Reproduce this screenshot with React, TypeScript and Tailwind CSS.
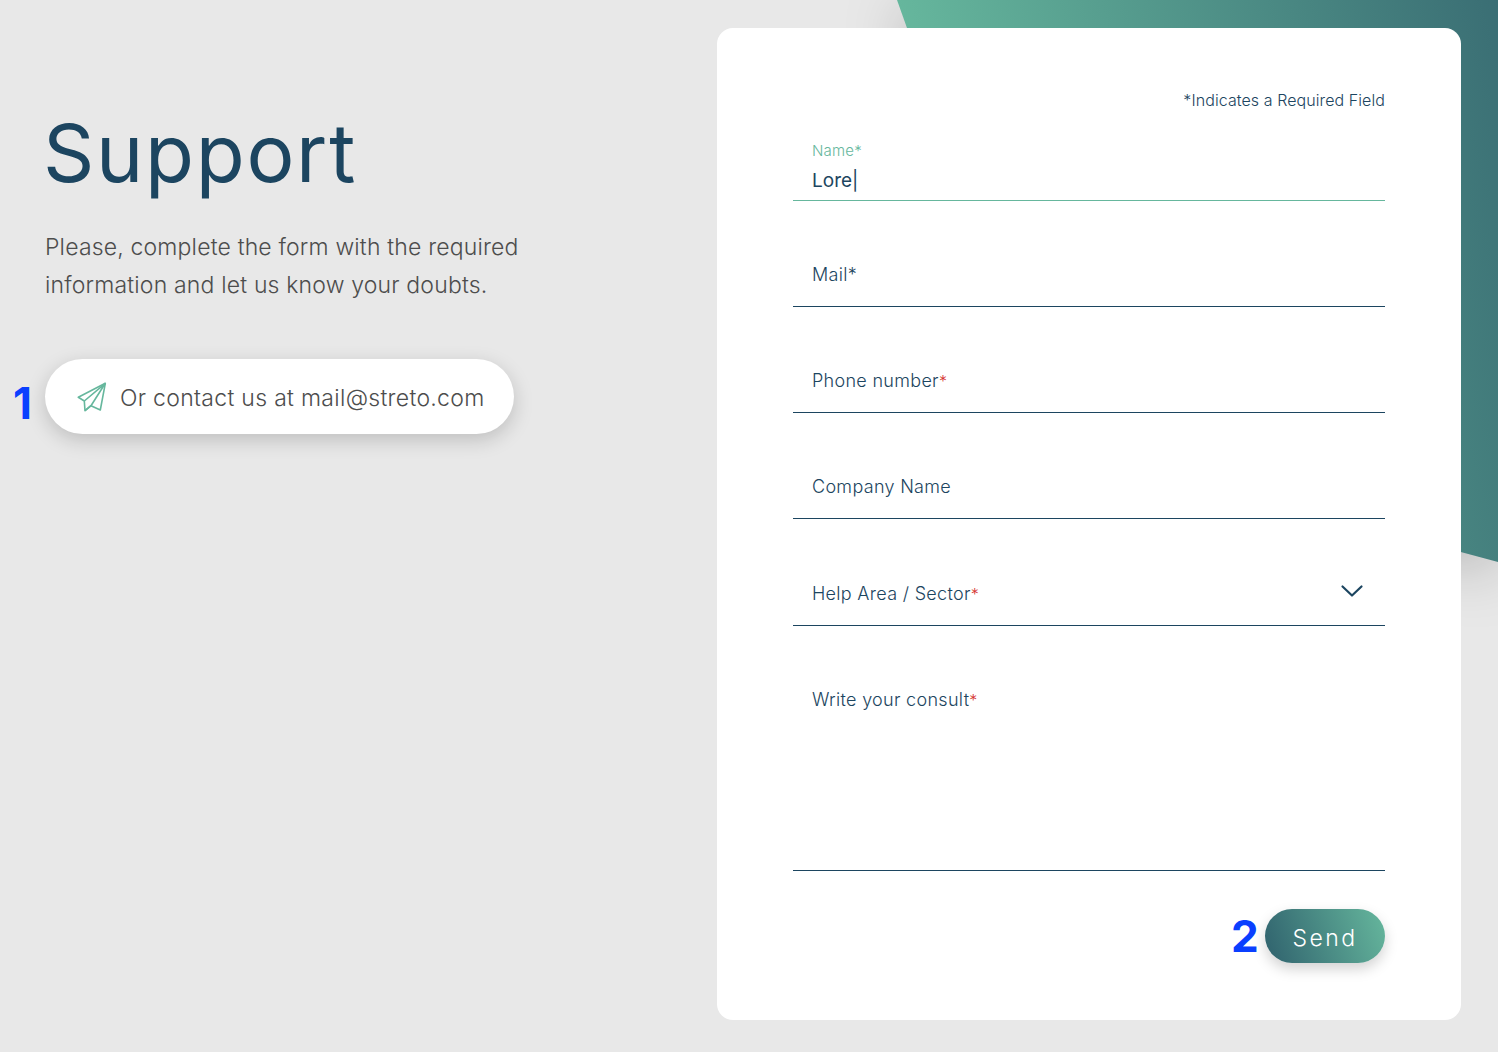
import React from "react";

type Field = {
  label: string;
  star?: boolean;
};

const fields: Field[] = [
  { label: "Mail*" },
  { label: "Phone number", star: true },
  { label: "Company Name" },
];

const PlaneIcon = () => (
  <svg width="30" height="30" viewBox="0 0 30 30" fill="none" stroke="#66b79d" strokeWidth="1.6" strokeLinejoin="round">
    <path d="M28.3 1.3 1.3 15.3l6 3.7.7 9.7 6-5 9.3 4.3z" />
    <path d="M28.3 1.3 7.3 19M28.3 1.3 14 23.7 8 28.7" />
  </svg>
);

const Label = ({ label, star }: Field) => (
  <span className="text-[18px] leading-[24px] text-[#1c4560] font-light tracking-[0.3px]">
    {label}
    {star && <span className="text-[16px] text-[#d5322e]">*</span>}
  </span>
);

const App = () => {
  return (
    <div className="relative h-[1052px] overflow-hidden bg-[#e8e8e8] font-['Inter',sans-serif] flex">
      {/* green shape behind the card */}
      <div className="absolute inset-0 drop-shadow-[0_12px_30px_rgba(0,0,0,0.22)]">
        <div className="h-full w-full bg-[linear-gradient(75deg,#66b79d_66%,#3a6e74_100%)] [clip-path:polygon(897px_0,1498px_0,1498px_562px,1055px_443px)]" />
      </div>

      <div className="relative w-[717px] pl-[45px] pt-[103px] shrink-0">
        <h1 className="-ml-[2px] text-[80px] leading-[100px] text-[#1c4560] font-normal tracking-[1.7px]">Support</h1>
        <p className="mt-[25px] text-[23px] leading-[38px] text-[#4d4d4d] font-light tracking-[0.17px]">
          Please, complete the form with the required
          <br />
          information and let us know your doubts.
        </p>
        <div className="relative mt-[55px] w-[469px] h-[75px] rounded-full bg-white shadow-[0_6px_20px_rgba(0,0,0,0.18)] flex items-center pl-[32px] gap-[13px]">
          <span className="absolute -left-[32px] top-[19px] text-[44px] leading-[50px] font-bold text-[#0a3fff]">1</span>
          <PlaneIcon />
          <span className="mt-[3px] text-[23px] text-[#4d4d4d] font-light tracking-[0.3px]">Or contact us at mail@streto.com</span>
        </div>
      </div>

      <div className="relative mt-[28px] w-[744px] h-[992px] bg-white rounded-[16px] px-[76px] pt-[60px] flex flex-col">
        <p className="text-right text-[16px] leading-[24px] text-[#1c4560] font-light tracking-[0.08px]">*Indicates a Required Field</p>

        <div className="mt-[28px] h-[61px] border-b border-[#66b79d] pl-[19px] flex flex-col">
          <span className="mt-[1px] text-[15px] leading-[20px] text-[#66b79d] font-light tracking-[0.2px]">Name*</span>
          <span className="mt-[7px] text-[19px] leading-[26px] text-[#1c4560]">Lore|</span>
        </div>

        {fields.map((field) => (
          <div key={field.label} className="h-[106px] border-b border-[#1c4560] pl-[19px] flex items-end pb-[19px]">
            <Label {...field} />
          </div>
        ))}

        <div className="h-[107px] border-b border-[#1c4560] pl-[19px] pr-[21px] flex items-end justify-between pb-[19px]">
          <Label label="Help Area / Sector" star />
          <svg width="24" height="14" viewBox="0 0 24 14" fill="none" stroke="#1c4560" strokeWidth="2.2" strokeLinecap="round" strokeLinejoin="round" className="mb-[8px]">
            <path d="M2.500 2.500 12 11.500 21.500 2.500" />
          </svg>
        </div>

        <div className="h-[245px] border-b border-[#1c4560] pl-[19px] pt-[62px]">
          <Label label="Write your consult" star />
        </div>

        <div className="mt-[38px] flex justify-end">
          <button className="relative w-[120px] h-[54px] rounded-full bg-[linear-gradient(70deg,#2f616d,#66b79d)] text-white text-[23px] leading-[58px] tracking-[2.5px] font-light shadow-[0_6px_14px_rgba(0,0,0,0.18)]">
            <span className="absolute -left-[34px] top-[2px] text-[44px] leading-[50px] font-bold tracking-normal text-[#0a3fff]">2</span>
            Send
          </button>
        </div>
      </div>
    </div>
  );
};

export default App;
